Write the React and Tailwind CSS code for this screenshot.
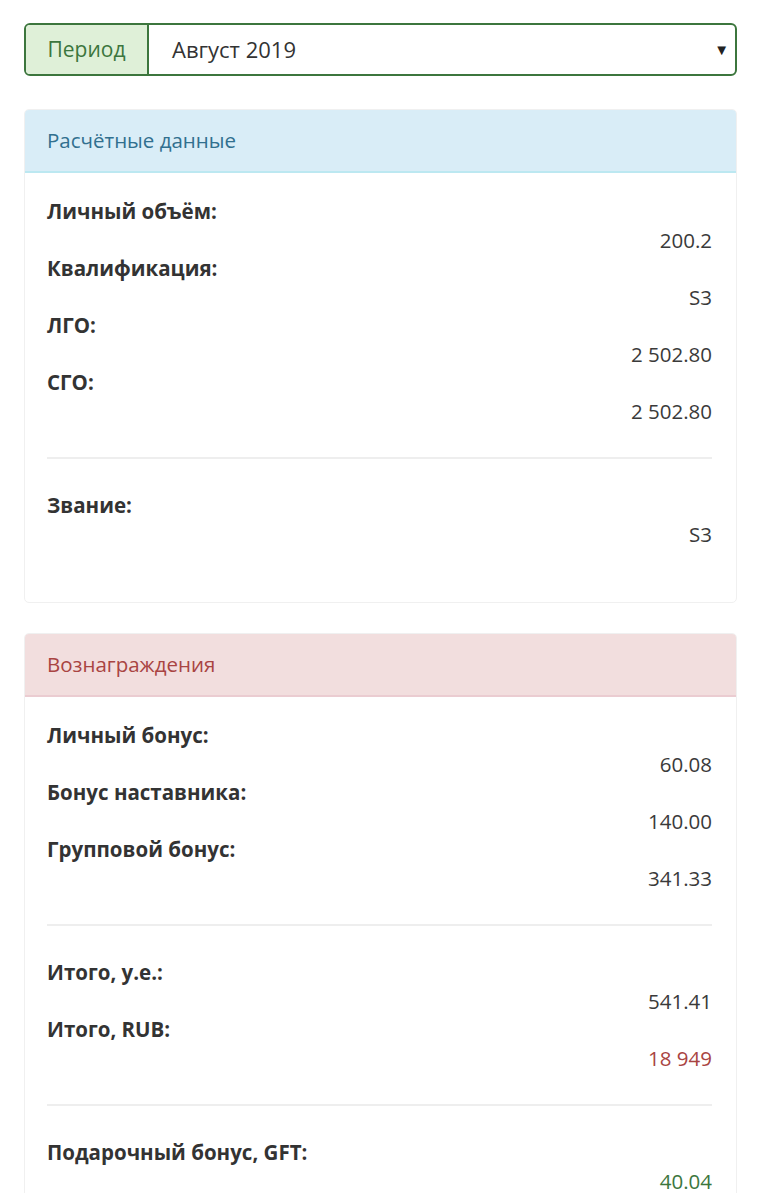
import React from "react";

const calc = [
  { label: "Личный объём:", value: "200.2" },
  { label: "Квалификация:", value: "S3" },
  { label: "ЛГО:", value: "2 502.80" },
  { label: "СГО:", value: "2 502.80" },
];

const bonuses = [
  { label: "Личный бонус:", value: "60.08" },
  { label: "Бонус наставника:", value: "140.00" },
  { label: "Групповой бонус:", value: "341.33" },
];

const totals = [
  { label: "Итого, у.е.:", value: "541.41" },
  { label: "Итого, RUB:", value: "18 949", color: "text-[#a94442]" },
];

const Rows = ({ items }) => (
  <div>
    {items.map((item) => (
      <div key={item.label}>
        <div className="font-bold text-[#333] leading-[28.5px]">{item.label}</div>
        <div className={"text-right leading-[28.5px] " + (item.color || "text-[#3a3a3a]")}>
          {item.value}
        </div>
      </div>
    ))}
  </div>
);

const Divider = () => <div className="h-[2px] bg-[#eeeeee] my-[32px]" />;

const Panel = ({ title, headClass, children }) => (
  <div className="border border-[#f0f0f0] rounded-[5px] bg-white overflow-hidden">
    <div className={"h-[63px] flex items-center px-[22px] border-b-2 " + headClass}>{title}</div>
    <div className="pl-[22px] pr-[24px] pt-[24px]">{children}</div>
  </div>
);

export default function App() {
  return (
    <div className="bg-white min-h-screen pl-[24px] pr-[22px] pt-[23px] text-[20.5px] font-['Open_Sans',sans-serif]">
      {/* Period selector */}
      <div className="flex h-[53px] border-2 border-[#3c763d] rounded-[6px] overflow-hidden">
        <div className="w-[123px] bg-[#dff0d8] text-[#3c763d] flex items-center justify-center border-r-2 border-[#3c763d] text-[21px]">
          Период
        </div>
        <div className="flex-1 flex items-center justify-between pl-[23px] pr-[6px] text-[22px] text-[#333]">
          <span>Август 2019</span>
          <span className="text-[15px] text-[#222]">▼</span>
        </div>
      </div>

      <div className="mt-[33px]">
        <Panel title="Расчётные данные" headClass="bg-[#d9edf7] text-[#31708f] border-[#bce8f1]">
          <Rows items={calc} />
          <Divider />
          <Rows items={[{ label: "Звание:", value: "S3" }]} />
          <div className="h-[54px]" />
        </Panel>
      </div>

      <div className="mt-[30px]">
        <Panel title="Вознаграждения" headClass="bg-[#f2dede] text-[#a94442] border-[#ebccd1]">
          <Rows items={bonuses} />
          <Divider />
          <Rows items={totals} />
          <Divider />
          <Rows items={[{ label: "Подарочный бонус, GFT:", value: "40.04", color: "text-[#3c763d]" }]} />
          <div className="h-[55px]" />
        </Panel>
      </div>
    </div>
  );
}
